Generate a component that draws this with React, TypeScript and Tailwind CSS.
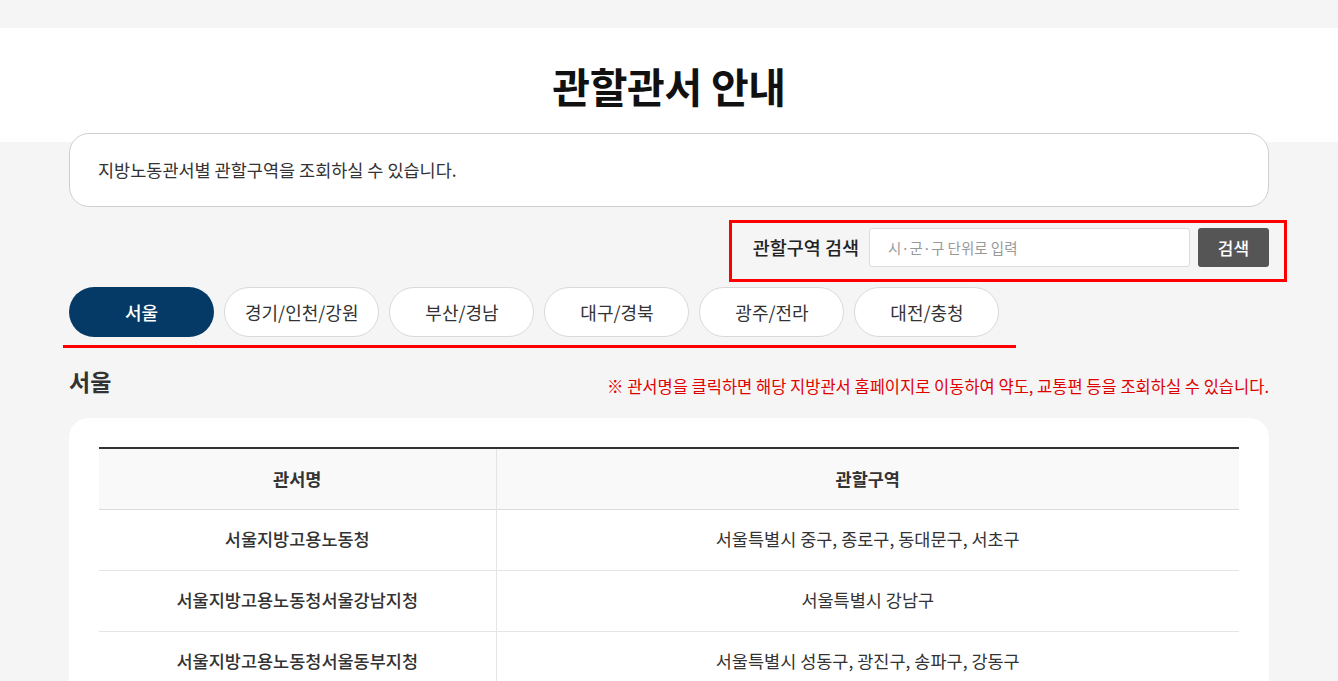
import React from "react";

const tabs = ["서울", "경기/인천/강원", "부산/경남", "대구/경북", "광주/전라", "대전/충청"];

const rows: [string, string][] = [
  ["서울지방고용노동청", "서울특별시 중구, 종로구, 동대문구, 서초구"],
  ["서울지방고용노동청서울강남지청", "서울특별시 강남구"],
  ["서울지방고용노동청서울동부지청", "서울특별시 성동구, 광진구, 송파구, 강동구"],
  ["서울지방고용노동청서울서부지청", "서울특별시 마포구, 서대문구, 은평구, 용산구"],
  ["서울지방고용노동청서울남부지청", "서울특별시 영등포구, 양천구, 강서구, 구로구"],
];

export default function App() {
  return (
    <div
      className="min-h-screen bg-[#f5f5f5] pt-[28px] text-[#333]"
      style={{ fontFamily: '"Noto Sans CJK KR", "Noto Sans", sans-serif' }}
    >
      <div className="h-[114px] bg-white flex items-center justify-center">
        <h1 className="text-[41px] font-bold text-[#111] tracking-[-0.3px] leading-none">
          관할관서 안내
        </h1>
      </div>

      <div className="w-[1200px] mx-auto -mt-[9px] pb-10">
        <div className="h-[74px] bg-white border border-[#cfcfcf] rounded-[20px] flex items-center px-[28px]">
          <p className="text-[17.5px] text-[#333]">지방노동관서별 관할구역을 조회하실 수 있습니다.</p>
        </div>

        <div className="flex justify-end mt-[21px]">
          <div className="relative flex items-center">
            <span className="text-[18.5px] font-medium text-[#222] mr-[10px]">관할구역 검색</span>
            <div className="w-[321px] h-[39px] bg-white border border-[#dcdcdc] rounded-[3px] flex items-center px-[18px]">
              <span className="text-[14.5px] text-[#999]">시·군·구 단위로 입력</span>
            </div>
            <button className="ml-[8px] w-[71px] h-[39px] bg-[#555] rounded-[3px] text-white text-[17px] font-medium">
              검색
            </button>
            <span className="absolute -top-[8px] -left-[24px] -right-[18px] -bottom-[15px] border-[3px] border-[#ff0000] pointer-events-none" />
          </div>
        </div>

        <div className="relative flex gap-[10px] mt-[20px]">
          {tabs.map((t, i) => (
            <button
              key={t}
              className={
                i === 0
                  ? "h-[50px] min-w-[145px] px-[20px] rounded-full bg-[#053a66] text-white text-[18px] font-medium"
                  : "h-[50px] min-w-[145px] px-[20px] rounded-full bg-white border border-[#d9d9d9] text-[#333] text-[18px]"
              }
            >
              {t}
            </button>
          ))}
          <span className="absolute top-[58px] -left-[6px] w-[953px] h-[3px] bg-[#ff0000]" />
        </div>

        <div className="flex items-end justify-between mt-[30px]">
          <h2 className="text-[23px] font-bold text-[#333] leading-[28px]">서울</h2>
          <p className="text-[16.5px] text-[#e00000] leading-[22px] mb-[-2px]">
            ※ 관서명을 클릭하면 해당 지방관서 홈페이지로 이동하여 약도, 교통편 등을 조회하실 수 있습니다.
          </p>
        </div>

        <div className="mt-[23px] bg-white rounded-[20px] px-[30px] pt-[29px] pb-[30px]">
          <table className="w-full border-collapse border-t-2 border-[#333]">
            <thead>
              <tr className="bg-[#f9f9f9] h-[61px] border-b border-[#dcdcdc]">
                <th className="w-[397px] text-[17.5px] font-bold text-[#333] border-r border-[#e5e5e5]">관서명</th>
                <th className="text-[17.5px] font-bold text-[#333]">관할구역</th>
              </tr>
            </thead>
            <tbody>
              {rows.map(([a, b]) => (
                <tr key={a} className="h-[61px] border-b border-[#e5e5e5]">
                  <td className="text-center text-[17.5px] font-medium text-[#333] border-r border-[#e5e5e5]">{a}</td>
                  <td className="text-center text-[17.5px] text-[#333]">{b}</td>
                </tr>
              ))}
            </tbody>
          </table>
        </div>
      </div>
    </div>
  );
}
